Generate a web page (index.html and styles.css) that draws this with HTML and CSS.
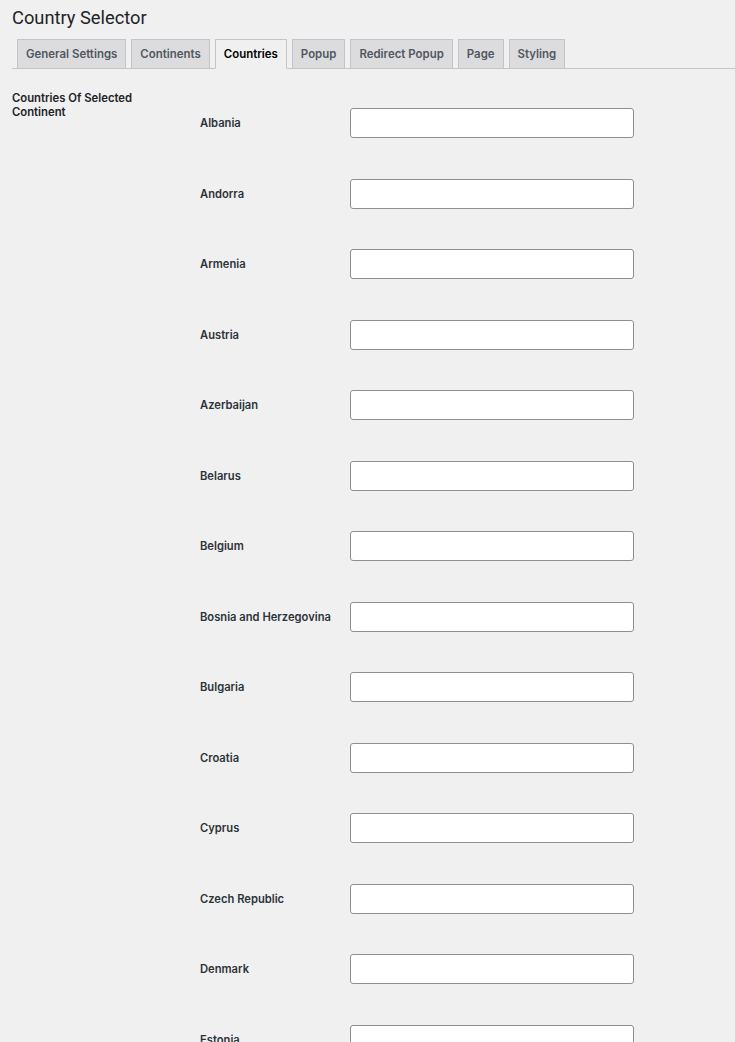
FILE: index.html
```html
<!DOCTYPE html>
<html lang="en">
<head>
<meta charset="utf-8">
<title>Country Selector</title>
<link rel="stylesheet" href="styles.css">
</head>
<body>
<div class="wrap">
  <h1 class="title">Country Selector</h1>
  <nav class="tabs">
    <a class="tab">General Settings</a>
    <a class="tab">Continents</a>
    <a class="tab active">Countries</a>
    <a class="tab">Popup</a>
    <a class="tab">Redirect Popup</a>
    <a class="tab">Page</a>
    <a class="tab">Styling</a>
  </nav>
  <div class="section">
    <div class="section-label">Countries Of Selected Continent</div>
    <div class="rows">
      <div class="row"><label class="row-label">Albania</label><input class="field" type="text"></div>
      <div class="row"><label class="row-label">Andorra</label><input class="field" type="text"></div>
      <div class="row"><label class="row-label">Armenia</label><input class="field" type="text"></div>
      <div class="row"><label class="row-label">Austria</label><input class="field" type="text"></div>
      <div class="row"><label class="row-label">Azerbaijan</label><input class="field" type="text"></div>
      <div class="row"><label class="row-label">Belarus</label><input class="field" type="text"></div>
      <div class="row"><label class="row-label">Belgium</label><input class="field" type="text"></div>
      <div class="row"><label class="row-label">Bosnia and Herzegovina</label><input class="field" type="text"></div>
      <div class="row"><label class="row-label">Bulgaria</label><input class="field" type="text"></div>
      <div class="row"><label class="row-label">Croatia</label><input class="field" type="text"></div>
      <div class="row"><label class="row-label">Cyprus</label><input class="field" type="text"></div>
      <div class="row"><label class="row-label">Czech Republic</label><input class="field" type="text"></div>
      <div class="row"><label class="row-label">Denmark</label><input class="field" type="text"></div>
      <div class="row"><label class="row-label">Estonia</label><input class="field" type="text"></div>
      <div class="row"><label class="row-label">Finland</label><input class="field" type="text"></div>
      <div class="row"><label class="row-label">France</label><input class="field" type="text"></div>
    </div>
  </div>
</div>
</body>
</html>
```

FILE: styles.css
```css
html, body {
  margin: 0;
  padding: 0;
  background: #f0f0f1;
}

body {
  font-family: Inter, "Liberation Sans", sans-serif;
  color: #1d2327;
  overflow: hidden;
}

.wrap {
  margin-left: 12px;
}

.title {
  margin: 0;
  padding-top: 5px;
  font-family: Roboto, "Liberation Sans", sans-serif;
  font-size: 18.3px;
  line-height: 26px;
  font-weight: 400;
  color: #1d2327;
}

.tabs {
  display: flex;
  gap: 5px;
  margin-top: 8px;
  padding-left: 5px;
  border-bottom: 1px solid #c3c4c7;
}

.tab {
  display: block;
  margin-bottom: -1px;
  padding: 0 8px;
  height: 28px;
  line-height: 28px;
  border: 1px solid #c3c4c7;
  background: #dcdcde;
  color: #50575e;
  font-size: 11.45px;
  font-weight: 600;
  white-space: nowrap;
}

.tab.active {
  background: #f0f0f1;
  color: #000;
  border-bottom-color: #f0f0f1;
}

.section {
  display: grid;
  grid-template-columns: 188px 1fr;
  padding-top: 18.75px;
}

.section-label {
  padding-top: 3px;
  width: 130px;
  font-size: 11.3px;
  line-height: 14px;
  font-weight: 600;
  color: #1d2327;
}

.row {
  display: grid;
  grid-template-columns: 150px 284px;
  align-items: center;
  padding: 20.25px 0;
}

.row-label {
  font-size: 11.2px;
  line-height: 14px;
  font-weight: 600;
  color: #2c3338;
}

.field {
  box-sizing: border-box;
  width: 284px;
  height: 30px;
  margin: 0;
  border: 1px solid #8c8f94;
  border-radius: 3px;
  background: #fff;
}
```
